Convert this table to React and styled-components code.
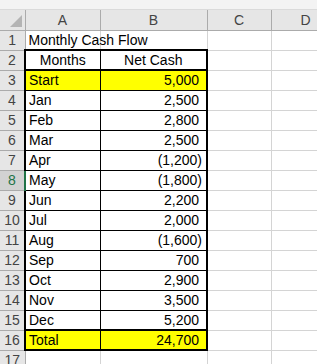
import React from "react";
import styled, { createGlobalStyle } from "styled-components";

const GlobalStyle = createGlobalStyle`
  html, body {
    margin: 0;
    padding: 0;
    background: #ffffff;
    overflow: hidden;
  }
  body {
    font-family: "Liberation Sans", Arial, sans-serif;
  }
`;

const theme = {
  gridColor: "#d4d4d4",
  headerBg: "#e6e6e6",
  headerBorder: "#ababab",
  headerText: "#444444",
  selectedHeaderBg: "#d2d2d2",
  selectedGreen: "#217346",
  yellow: "#ffff00",
  stripBg: "#f3f3f3",
};

const rows = [
  ["Jan", "2,500"],
  ["Feb", "2,800"],
  ["Mar", "2,500"],
  ["Apr", "(1,200)"],
  ["May", "(1,800)"],
  ["Jun", "2,200"],
  ["Jul", "2,000"],
  ["Aug", "(1,600)"],
  ["Sep", "700"],
  ["Oct", "2,900"],
  ["Nov", "3,500"],
  ["Dec", "5,200"],
];

const Page = styled.div`
  width: 317px;
  height: 364px;
  overflow: hidden;
  display: flex;
  flex-direction: column;
`;

const TopStrip = styled.div`
  height: 10px;
  flex: none;
  background: ${theme.stripBg};
  border-bottom: 1px solid #dadada;
  box-sizing: border-box;
`;

const Sheet = styled.table`
  border-collapse: collapse;
  table-layout: fixed;
  width: 340px;
  font-size: 14px;
  color: #000;
`;

const Col = styled.col`
  width: ${(p) => p.w}px;
`;

const Row = styled.tr`
  height: 20px;
`;

const Corner = styled.th`
  position: relative;
  background: ${theme.headerBg};
  border-right: 1px solid ${theme.headerBorder};
  border-bottom: 1px solid ${theme.headerBorder};
  padding: 0;
`;

const CornerTriangle = styled.div`
  position: absolute;
  right: 3px;
  bottom: 3px;
  width: 0;
  height: 0;
  border-left: 12px solid transparent;
  border-bottom: 12px solid #b4b4b4;
`;

const ColHeader = styled.th`
  background: ${theme.headerBg};
  border-right: 1px solid ${theme.headerBorder};
  border-bottom: 1px solid ${theme.headerBorder};
  font-weight: normal;
  color: ${theme.headerText};
  text-align: center;
  padding: 0;
  line-height: 18px;
`;

const RowHeader = styled.th`
  background: ${(p) => (p.selected ? theme.selectedHeaderBg : theme.headerBg)};
  border-right: ${(p) =>
    p.selected ? `2px solid ${theme.selectedGreen}` : `1px solid ${theme.headerBorder}`};
  border-bottom: 1px solid ${theme.headerBorder};
  font-weight: normal;
  color: ${(p) => (p.selected ? theme.selectedGreen : theme.headerText)};
  text-align: center;
  padding: 0;
  line-height: 18px;
`;

const Cell = styled.td`
  border: 1px solid ${theme.gridColor};
  padding: 0 ${(p) => (p.negative ? 4 : p.right ? 7 : 3)}px 0 3px;
  text-align: ${(p) => (p.center ? "center" : p.right ? "right" : "left")};
  background: ${(p) => (p.highlight ? theme.yellow : "transparent")};
  white-space: nowrap;
  overflow: visible;
  line-height: 18px;
`;

const TableCell = styled(Cell)`
  border-left: ${(p) => (p.first ? "2px" : "1px")} solid #000;
  border-right: ${(p) => (p.last ? "2px" : "1px")} solid #000;
  border-top: ${(p) => (p.thickTop ? "2px" : "1px")} solid #000;
  border-bottom: ${(p) => (p.thickBottom ? "2px" : "1px")} solid #000;
`;

function DataRow({ num, label, value, highlight, thickTop, thickBottom, selected }) {
  const negative = value.startsWith("(");
  return (
    <Row>
      <RowHeader selected={selected}>{num}</RowHeader>
      <TableCell first highlight={highlight} thickTop={thickTop} thickBottom={thickBottom}>
        {label}
      </TableCell>
      <TableCell
        last
        right
        negative={negative}
        highlight={highlight}
        thickTop={thickTop}
        thickBottom={thickBottom}
      >
        {value}
      </TableCell>
      <Cell />
      <Cell />
    </Row>
  );
}

export default function App() {
  return (
    <Page>
      <GlobalStyle />
      <TopStrip />
      <Sheet>
        <colgroup>
          <Col w={25} />
          <Col w={75} />
          <Col w={107} />
          <Col w={64} />
          <Col w={69} />
        </colgroup>
        <thead>
          <Row>
            <Corner>
              <CornerTriangle />
            </Corner>
            <ColHeader>A</ColHeader>
            <ColHeader>B</ColHeader>
            <ColHeader>C</ColHeader>
            <ColHeader>D</ColHeader>
          </Row>
        </thead>
        <tbody>
          <Row>
            <RowHeader>1</RowHeader>
            <Cell>Monthly Cash Flow</Cell>
            <Cell />
            <Cell />
            <Cell />
          </Row>
          <Row>
            <RowHeader>2</RowHeader>
            <TableCell first center thickTop thickBottom>
              Months
            </TableCell>
            <TableCell last center thickTop thickBottom>
              Net Cash
            </TableCell>
            <Cell />
            <Cell />
          </Row>
          <DataRow num={3} label="Start" value="5,000" highlight thickTop />
          {rows.map(([label, value], i) => (
            <DataRow
              key={label}
              num={i + 4}
              label={label}
              value={value}
              selected={i + 4 === 8}
              thickBottom={i === rows.length - 1}
            />
          ))}
          <DataRow num={16} label="Total" value="24,700" highlight thickTop thickBottom />
          <Row>
            <RowHeader>17</RowHeader>
            <Cell />
            <Cell />
            <Cell />
            <Cell />
          </Row>
        </tbody>
      </Sheet>
    </Page>
  );
}
